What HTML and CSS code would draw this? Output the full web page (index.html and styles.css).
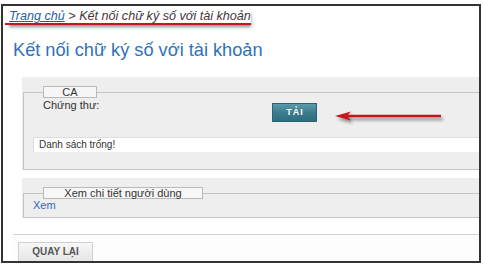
FILE: index.html
```html
<!DOCTYPE html>
<html lang="vi">
<head>
<meta charset="utf-8">
<title>Kết nối chữ ký số với tài khoản</title>
<link rel="stylesheet" href="styles.css">
</head>
<body>
<div class="frame">
  <div class="crumb"><a class="crumb-link" href="#">Trang chủ</a> &gt; Kết nối chữ ký số với tài khoản</div>
  <h1 class="title">Kết nối chữ ký số với tài khoản</h1>

  <div class="panel panel-ca">
    <fieldset class="group">
      <legend class="legend legend-ca"><span class="legend-text">CA</span></legend>
      <div class="cert-row">
        <span class="cert-label">Chứng thư:</span>
        <button class="btn-load" type="button">TẢI</button>
        <svg class="arrow" width="110" height="16" viewBox="0 0 110 16" aria-hidden="true">
          <line x1="11" y1="8" x2="106" y2="8" stroke="#c8151d" stroke-width="2.4"/>
          <polygon points="0,8 16,3.5 12,8 16,12.5" fill="#c8151d"/>
        </svg>
      </div>
      <div class="list-empty">Danh sách trống!</div>
    </fieldset>
  </div>

  <div class="panel panel-user">
    <fieldset class="group group-user">
      <legend class="legend legend-user"><span class="legend-text">Xem chi tiết người dùng</span></legend>
      <a class="view-link" href="#">Xem</a>
    </fieldset>
  </div>

  <div class="footer">
    <button class="btn-back" type="button">QUAY LẠI</button>
  </div>
</div>
</body>
</html>
```

FILE: styles.css
```css
html, body {
  margin: 0;
  padding: 0;
  background: #ffffff;
}

body {
  font-family: "Liberation Sans", Arial, sans-serif;
  color: #333333;
}

.frame {
  box-sizing: border-box;
  width: 480px;
  height: 259px;
  margin: 4px 0 0 1px;
  border: 2px solid #333333;
  overflow: hidden;
  background: #ffffff;
}

.crumb {
  display: inline-block;
  margin-left: 2px;
  padding: 1px 0 0 4px;
  font-size: 12.6px;
  font-style: italic;
  line-height: 14px;
  color: #3a3a3a;
  border-bottom: 2px solid #c8141b;
  box-shadow: 2px 4px 3px -2px rgba(0, 0, 0, 0.45);
}

.crumb-link {
  color: #2a5caa;
  text-decoration: underline;
}

.title {
  margin: 14px 0 0 10px;
  font-size: 18.2px;
  font-weight: normal;
  line-height: 22px;
  color: #2f72b8;
}

.panel {
  margin-left: 19px;
  margin-right: -40px;
  padding: 9px 0 0 1px;
  background: #eeeeee;
}

.panel-ca {
  margin-top: 16px;
}

.panel-user {
  margin-top: 8px;
}

.group {
  margin: 0;
  min-width: 0;
  padding: 0 0 17px 9px;
  border: 1px solid #c4c4c4;
}

.group-user {
  padding-bottom: 6px;
}

.legend {
  box-sizing: border-box;
  margin-left: 10px;
  padding: 0;
  height: 12px;
  border: 1px solid #b9b9b9;
  background: #f7f7f7;
  text-align: left;
}

.legend-text {
  display: block;
  font-size: 11px;
  line-height: 10px;
  text-align: center;
  color: #333333;
}

.legend-ca {
  width: 54px;
}

.legend-user {
  width: 160px;
}

.cert-row {
  display: flex;
  align-items: flex-start;
  margin-left: 10px;
  margin-top: 1px;
}

.cert-label {
  width: 229px;
  font-size: 11px;
  line-height: 13px;
  color: #333333;
}

.btn-load {
  box-sizing: border-box;
  width: 45px;
  height: 19px;
  margin-top: 4px;
  padding: 0 0 0 1px;
  border: 1px solid #2c6272;
  background: linear-gradient(#5a9aab, #3a7a8b 55%, #2f6e7f);
  color: #ffffff;
  font-family: "Liberation Sans", Arial, sans-serif;
  font-size: 9px;
  font-weight: bold;
  letter-spacing: 1px;
  line-height: 17px;
}

.arrow {
  display: block;
  margin: 9px 0 0 18px;
  filter: drop-shadow(2px 3px 1.5px rgba(0, 0, 0, 0.4));
}

.list-empty {
  margin-top: 13px;
  height: 15px;
  box-sizing: border-box;
  padding-left: 5px;
  border-top: 1px solid #dddddd;
  border-left: 1px solid #dddddd;
  background: #ffffff;
  font-size: 10px;
  line-height: 13px;
  color: #333333;
}

.view-link {
  display: block;
  width: max-content;
  font-size: 11px;
  line-height: 12px;
  color: #3366b3;
  text-decoration: none;
}

.footer {
  margin: 16px 0 0 10px;
  padding: 6px 0 0 5px;
  border-top: 1px solid #d2d2d2;
  background: #fdfdfd;
  height: 30px;
}

.btn-back {
  box-sizing: border-box;
  width: 75px;
  height: 20px;
  padding: 0;
  border: 1px solid #d0d0d0;
  background: linear-gradient(#f7f7f7, #e6e6e6);
  color: #555555;
  font-family: "Liberation Sans", Arial, sans-serif;
  font-size: 10px;
  font-weight: bold;
  line-height: 18px;
}
```
